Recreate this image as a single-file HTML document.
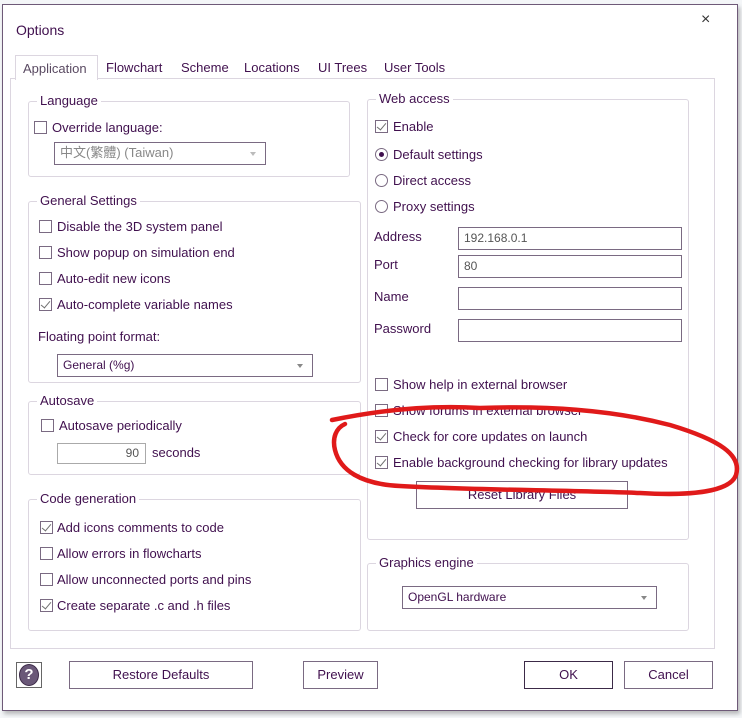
<!DOCTYPE html>
<html><head><meta charset="utf-8"><style>
*{box-sizing:border-box;margin:0;padding:0}
body{width:742px;height:718px;background:#f4f6f8;position:relative;overflow:hidden;font-family:"Liberation Sans","Noto Sans CJK TC",sans-serif;font-size:13px;color:#40104e}
.a{position:absolute;white-space:nowrap}
.dlg{position:absolute;left:2px;top:4px;width:736px;height:707px;background:#fff;border:1px solid #6e5a78;box-shadow:2px 3px 4px rgba(0,0,0,.25)}
.grp{position:absolute;border:1px solid #dcd6e0;border-radius:3px}
.gt{position:absolute;background:#fff;padding:0 3px;top:-9px;left:8px;line-height:16px}
.cb{position:absolute;width:13px;height:13px;border:1px solid #7a6a82;background:#fff}
.cb.on::after{content:"";position:absolute;left:3px;top:0px;width:4px;height:8px;border:solid #707070;border-width:0 1.5px 1.5px 0;transform:rotate(40deg)}
.rb{position:absolute;width:13px;height:13px;border:1px solid #7a6a82;border-radius:50%;background:#fff}
.rb.on::after{content:"";position:absolute;left:3px;top:3px;width:5px;height:5px;border-radius:50%;background:#40104e}
.inp{position:absolute;border:1px solid #7a6a82;background:#fff;padding-left:5px;line-height:20px;font-size:12px;color:#555}
.btn{position:absolute;border:1px solid #7a6a82;background:#fff;text-align:center}
.arr{position:absolute;right:9px;top:9px;border:3px solid transparent;border-top:4px solid #888}
</style></head><body>
<div class="dlg"></div>
<div class="a" style="left:16px;top:22px;font-size:14px">Options</div>
<div class="a" style="left:701px;top:11px;font-size:16px;color:#333">×</div>
<div class="a" style="left:10px;top:78px;width:705px;height:571px;border:1px solid #dcd6e0"></div>
<div class="a" style="left:15px;top:55px;width:83px;height:25px;border:1px solid #dcd6e0;border-bottom:none;background:#fff;color:#5a4a62;padding:5px 0 0 7px">Application</div>
<div class="a" style="left:106px;top:60px">Flowchart</div>
<div class="a" style="left:181px;top:60px">Scheme</div>
<div class="a" style="left:244px;top:60px">Locations</div>
<div class="a" style="left:318px;top:60px">UI Trees</div>
<div class="a" style="left:384px;top:60px">User Tools</div>

<div class="grp" style="left:28px;top:101px;width:322px;height:76px"><div class="gt">Language</div></div>
<div class="cb" style="left:34px;top:121px"></div><div class="a" style="left:52px;top:120px">Override language:</div>
<div class="inp" style="left:54px;top:142px;width:212px;height:23px;color:#888;font-size:13px">中文(繁體) (Taiwan)<div class="arr" style="border-top-color:#bbb"></div></div>

<div class="grp" style="left:28px;top:201px;width:333px;height:182px"><div class="gt">General Settings</div></div>
<div class="cb" style="left:39px;top:220px"></div><div class="a" style="left:57px;top:219px">Disable the 3D system panel</div>
<div class="cb" style="left:39px;top:246px"></div><div class="a" style="left:57px;top:245px">Show popup on simulation end</div>
<div class="cb" style="left:39px;top:272px"></div><div class="a" style="left:57px;top:271px">Auto-edit new icons</div>
<div class="cb on" style="left:39px;top:298px"></div><div class="a" style="left:57px;top:297px">Auto-complete variable names</div>
<div class="a" style="left:38px;top:329px">Floating point format:</div>
<div class="inp" style="left:57px;top:354px;width:256px;height:23px;color:#40104e">General (%g)<div class="arr"></div></div>

<div class="grp" style="left:28px;top:401px;width:333px;height:74px"><div class="gt">Autosave</div></div>
<div class="cb" style="left:41px;top:419px"></div><div class="a" style="left:59px;top:418px">Autosave periodically</div>
<div class="inp" style="left:57px;top:443px;width:89px;height:21px;border-color:#aaa;text-align:right;padding-right:6px;line-height:19px">90</div>
<div class="a" style="left:152px;top:445px">seconds</div>

<div class="grp" style="left:28px;top:499px;width:333px;height:132px"><div class="gt">Code generation</div></div>
<div class="cb on" style="left:40px;top:521px"></div><div class="a" style="left:57px;top:520px">Add icons comments to code</div>
<div class="cb" style="left:40px;top:547px"></div><div class="a" style="left:57px;top:546px">Allow errors in flowcharts</div>
<div class="cb" style="left:40px;top:573px"></div><div class="a" style="left:57px;top:572px">Allow unconnected ports and pins</div>
<div class="cb on" style="left:40px;top:599px"></div><div class="a" style="left:57px;top:598px">Create separate .c and .h files</div>

<div class="grp" style="left:367px;top:99px;width:322px;height:441px"><div class="gt">Web access</div></div>
<div class="cb on" style="left:375px;top:120px"></div><div class="a" style="left:393px;top:119px">Enable</div>
<div class="rb on" style="left:375px;top:148px"></div><div class="a" style="left:393px;top:147px">Default settings</div>
<div class="rb" style="left:375px;top:174px"></div><div class="a" style="left:393px;top:173px">Direct access</div>
<div class="rb" style="left:375px;top:200px"></div><div class="a" style="left:393px;top:199px">Proxy settings</div>
<div class="a" style="left:374px;top:229px">Address</div><div class="inp" style="left:458px;top:227px;width:224px;height:23px">192.168.0.1</div>
<div class="a" style="left:374px;top:257px">Port</div><div class="inp" style="left:458px;top:255px;width:224px;height:23px">80</div>
<div class="a" style="left:374px;top:289px">Name</div><div class="inp" style="left:458px;top:287px;width:224px;height:23px"></div>
<div class="a" style="left:374px;top:321px">Password</div><div class="inp" style="left:458px;top:319px;width:224px;height:23px"></div>
<div class="cb" style="left:375px;top:378px"></div><div class="a" style="left:393px;top:377px">Show help in external browser</div>
<div class="cb" style="left:375px;top:404px"></div><div class="a" style="left:393px;top:403px">Show forums in external browser</div>
<div class="cb on" style="left:375px;top:430px"></div><div class="a" style="left:393px;top:429px">Check for core updates on launch</div>
<div class="cb on" style="left:375px;top:456px"></div><div class="a" style="left:393px;top:455px">Enable background checking for library updates</div>
<div class="btn" style="left:416px;top:481px;width:212px;height:28px;line-height:26px">Reset Library Files</div>

<div class="grp" style="left:367px;top:563px;width:322px;height:68px"><div class="gt">Graphics engine</div></div>
<div class="inp" style="left:402px;top:586px;width:255px;height:23px;color:#40104e">OpenGL hardware<div class="arr"></div></div>

<div class="a" style="left:16px;top:662px;width:26px;height:26px;border:1px solid #666;background:#fff"><div style="position:absolute;left:2px;top:1px;width:20px;height:22px;border-radius:50%;background:#6a5878;border:1px solid #3c2a48;color:#fff;font-weight:bold;text-align:center;line-height:20px;font-size:15px">?</div></div>
<div class="btn" style="left:69px;top:661px;width:184px;height:28px;line-height:26px">Restore Defaults</div>
<div class="btn" style="left:303px;top:661px;width:75px;height:28px;line-height:26px">Preview</div>
<div class="btn" style="left:524px;top:661px;width:89px;height:28px;line-height:26px;border-color:#3c2a48">OK</div>
<div class="btn" style="left:624px;top:661px;width:89px;height:28px;line-height:26px">Cancel</div>

<svg class="a" style="left:0;top:0" width="742" height="718"><path d="M332 420 C380 410 430 405 480 408 C560 405 620 412 670 425 C720 440 742 455 736 475 C730 492 690 496 640 493 C560 490 470 490 400 486 C360 484 340 470 335 450 C332 438 336 428 345 424" fill="none" stroke="#e01a1a" stroke-width="4.5" stroke-linecap="round"/></svg>
</body></html>
